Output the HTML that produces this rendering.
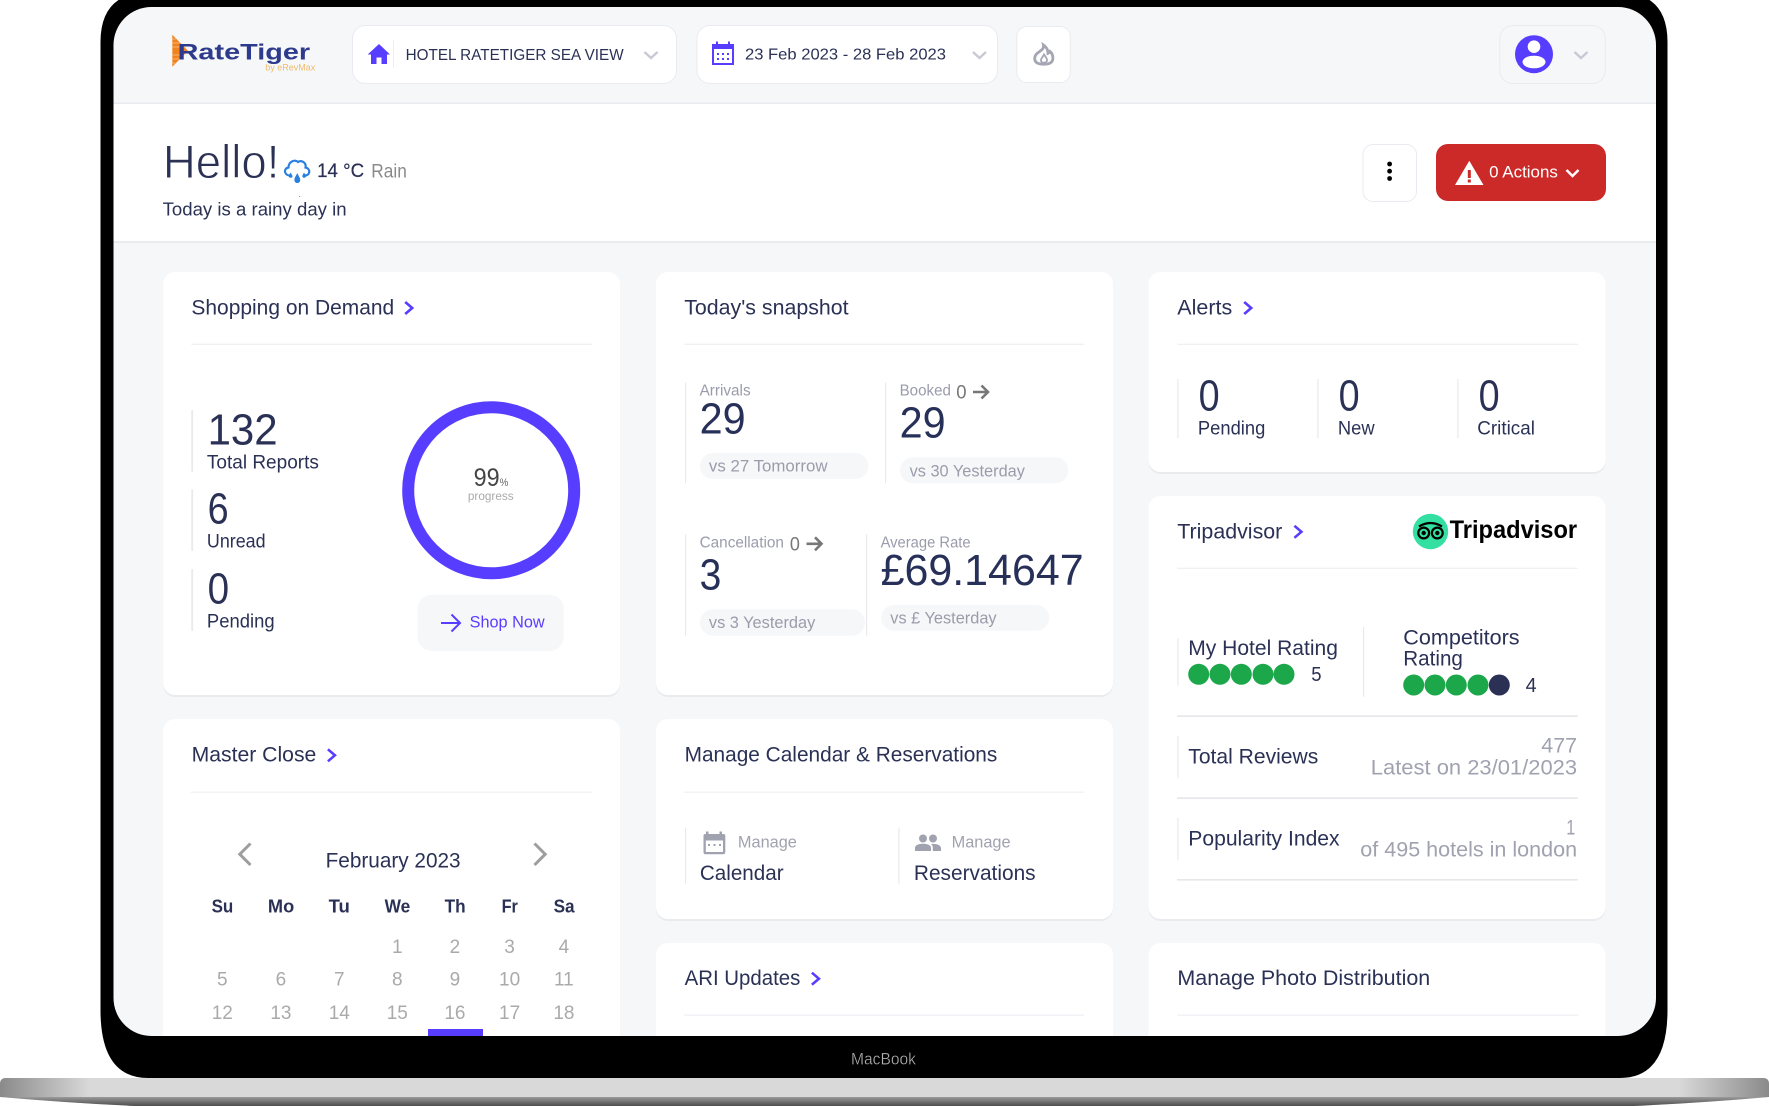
<!DOCTYPE html>
<html lang="en"><head><meta charset="utf-8"><title>RateTiger Dashboard</title>
<style>
html,body{margin:0;padding:0;background:#fff;width:1769px;height:1106px;overflow:hidden}
svg{display:block}
text{font-family:"Liberation Sans",sans-serif;fill:#2a3155;white-space:pre;transform:translate(-.4px,-.6px)}
.t{font-size:21px}.n{font-size:44px;fill:#273059}.l{font-size:19.5px}.s{font-size:15.5px;fill:#9a9cab}
.v{font-size:17px;fill:#9a9cab}.g{font-size:21px;fill:#a0a2b0}.d{font-size:19px;fill:#aaa}.w{font-size:18px;font-weight:700}
.o{font-size:19px;fill:#777}
.ch{fill:none;stroke:#573dff;stroke-width:2.6;transform:translate(-.6px,-.5px)}.sel{fill:none;stroke:#c8c9d4;stroke-width:2.4}
.ar{fill:none;stroke:#777;stroke-width:2.6}
.c{fill:#fff}.sh{fill:#e9ebef}.dv{fill:#eff0f4}.vb{fill:#e9eaee}
</style></head><body>
<svg xmlns="http://www.w3.org/2000/svg" width="1769" height="1106" viewBox="0 0 1769 1106">
<defs>
<linearGradient id="bl" x1="0" x2="1" y1="0" y2="0"><stop offset="0" stop-color="#8a8a8a"/><stop offset="1" stop-color="#d9d9d9"/></linearGradient>
<linearGradient id="br" x1="1" x2="0" y1="0" y2="0"><stop offset="0" stop-color="#8a8a8a"/><stop offset="1" stop-color="#d9d9d9"/></linearGradient>
<linearGradient id="bd" x1="0" x2="0" y1="0" y2="1"><stop offset="0" stop-color="#9a9a9a"/><stop offset="1" stop-color="#4d4d4d"/></linearGradient>
<clipPath id="scr"><rect x="113.5" y="7" width="1542.5" height="1029" rx="38" ry="38"/></clipPath>
</defs>

<!-- base -->
<path d="M6 1078H1763Q1769 1078 1769 1084V1097Q1700 1103 1634 1106H135Q69 1103 0 1097V1084Q0 1078 6 1078Z" fill="#d9d9d9"/>
<path d="M6 1078H90V1097H0V1084Q0 1078 6 1078Z" fill="url(#bl)"/>
<path d="M1763 1078H1679V1097H1769V1084Q1769 1078 1763 1078Z" fill="url(#br)"/>
<path d="M0 1097H1769Q1700 1103 1634 1106H135Q69 1103 0 1097Z" fill="url(#bd)"/>
<!-- bezel -->
<path d="M150.500 -8H1617.500Q1667.500 -8 1667.500 42V1010Q1667.500 1078 1620 1078H148Q100.500 1078 100.500 1010V42Q100.500 -8 150.500 -8Z" fill="#000"/>
<text x="851.400" y="1065" font-size="17" textLength="65" lengthAdjust="spacingAndGlyphs" style="fill:#b5b5b5" stroke="#000" stroke-width=".35">MacBook</text>

<g clip-path="url(#scr)">
<rect x="113" y="7" width="1544" height="1030" fill="#f6f7f9"/>
<!-- header band -->
<rect x="113" y="102.500" width="1544" height="1.500" fill="#e9ebf0"/>
<rect x="113" y="104" width="1544" height="137" fill="#fff"/>
<rect x="113" y="241" width="1544" height="2" fill="#e9ebf0"/>

<!-- logo -->
<polygon points="172.300,34.700 188,50.700 172.300,66.700" fill="#f0831e"/>
<g stroke="#f7c48a" stroke-width=".7"><path d="M172 39H176M172 43H180M172 47H184M172 55H183M172 59H179M172 63H175"/></g>
<text x="178" y="59.900" font-size="22.500" font-weight="700" textLength="132.500" lengthAdjust="spacingAndGlyphs" style="fill:#2e3a8c">RateTiger</text>
<text x="265.700" y="71.300" font-size="9" textLength="50" lengthAdjust="spacingAndGlyphs" style="fill:#f2bb6b">by eRevMax</text>

<!-- hotel select -->
<rect x="352.500" y="25.500" width="324" height="58" rx="13" fill="#fff" stroke="#e9ebf0"/>
<path d="M379 44L390 54.500H387V64H381.500V57.500H376.500V64H371V54.500H367.700Z" fill="#573dff"/>
<rect x="393.200" y="40" width=".8" height="28" fill="#e9ebf0"/>
<text x="406" y="60.500" font-size="16" textLength="218" lengthAdjust="spacingAndGlyphs">HOTEL RATETIGER SEA VIEW</text>
<path class="sel" d="M644.500 52L651 58L657.500 52"/>

<!-- date select -->
<rect x="697" y="25.500" width="300.500" height="58" rx="13" fill="#fff" stroke="#e9ebf0"/>
<rect x="713" y="45" width="20" height="19" fill="none" stroke="#573dff" stroke-width="2"/>
<rect x="713" y="45" width="20" height="4" fill="#573dff"/>
<path d="M717 41.500V46M729 41.500V46" stroke="#573dff" stroke-width="2"/>
<g fill="#573dff"><rect x="717" y="53" width="2" height="2"/><rect x="722" y="53" width="2" height="2"/><rect x="727" y="53" width="2" height="2"/><rect x="717" y="58" width="2" height="2"/><rect x="722" y="58" width="2" height="2"/><rect x="727" y="58" width="2" height="2"/></g>
<text x="745.400" y="60.300" font-size="16" textLength="201" lengthAdjust="spacingAndGlyphs">23 Feb 2023 - 28 Feb 2023</text>
<path class="sel" d="M973 52L979.500 58L986 52"/>

<!-- fire -->
<rect x="1016.800" y="26.500" width="53.500" height="56" rx="10" fill="#fff" stroke="#e9ebf0"/>
<path d="M1043.500 45C1044.500 49 1040.500 50.500 1037 53.500C1034 56.500 1034 60.500 1036.500 62.500C1039.500 64.800 1048 64.800 1051 62.500C1053.800 60 1053.500 54.500 1050 51.500C1049.500 52.500 1048.800 53 1048 53.300C1048 50 1046.500 47 1043.500 45Z" fill="none" stroke="#a5a6b4" stroke-width="2.800"/>
<path d="M1044 54.500C1045.500 57 1047.500 58.500 1047 60.800C1046 63.300 1041.500 63.300 1041 60.800C1040.500 58.500 1043 57 1044 54.500Z" fill="#fff" stroke="#a5a6b4" stroke-width="1.800"/>

<!-- user -->
<rect x="1499.800" y="25.500" width="105.500" height="58" rx="13" fill="#f6f7f9" stroke="#e9ebf0"/>
<circle cx="1534" cy="54.200" r="19" fill="#573dff"/>
<circle cx="1534" cy="46.700" r="6.300" fill="#fff"/>
<ellipse cx="1534" cy="62" rx="11.500" ry="6.300" fill="#fff"/>
<path class="sel" d="M1574.500 52L1581 58L1587.500 52"/>

<!-- hello -->
<text x="163.300" y="178.700" font-size="47.500" textLength="116.500" lengthAdjust="spacingAndGlyphs" stroke="#fff" stroke-width=".9">Hello!</text>
<path d="M291 175.500C284 176 283 168.500 288.500 167.500C288.500 161.500 295 159 298 162C302.500 159.500 306.500 163.500 305.500 167.500C311 168.500 310.500 176 304 175.500" fill="none" stroke="#2a80e0" stroke-width="2.200"/>
<path d="M297.300 173C298.500 176 300.200 177.500 300.200 180C300.200 184 294.400 184 294.400 180C294.400 177.500 296 176 297.300 173ZM290.500 172.500C291.300 174 292.500 175 292.500 176.200C292.500 178.300 288.800 178.300 288.800 176.200C288.800 175 289.800 174 290.500 172.500ZM304 172.500C304.800 174 306 175 306 176.200C306 178.300 302.300 178.300 302.300 176.200C302.300 175 303.300 174 304 172.500Z" fill="#2a80e0"/>
<rect x="299" y="196" width="1.200" height="1" fill="#6aa6ee"/>
<text x="317.500" y="177.700" font-size="19" textLength="47" lengthAdjust="spacingAndGlyphs" stroke="#2a3155" stroke-width=".2">14 °C</text>
<text x="371.700" y="178.300" font-size="19" textLength="35.500" lengthAdjust="spacingAndGlyphs" style="fill:#8a8a8a">Rain</text>
<text x="163" y="216" font-size="18" textLength="184" lengthAdjust="spacingAndGlyphs">Today is a rainy day in</text>

<!-- kebab -->
<rect x="1363" y="144.500" width="53.500" height="57" rx="10" fill="#fff" stroke="#e9ebf0"/>
<circle cx="1389.600" cy="164" r="2.400" fill="#000"/><circle cx="1389.600" cy="171.200" r="2.400" fill="#000"/><circle cx="1389.600" cy="178.500" r="2.400" fill="#000"/>
<!-- actions -->
<rect x="1436" y="144" width="170" height="57" rx="12" fill="#cc2929"/>
<path d="M1469.300 160.700L1483.500 185H1455Z" fill="#fff"/>
<rect x="1467.800" y="170" width="3" height="8" fill="#cc2929"/><rect x="1467.800" y="179.500" width="3" height="3" fill="#cc2929"/>
<text x="1489.500" y="178" font-size="16.500" textLength="68.800" lengthAdjust="spacingAndGlyphs" style="fill:#fff">0 Actions</text>
<path d="M1566.500 170L1572.500 176L1578.500 170" fill="none" stroke="#fff" stroke-width="2.500"/>

<!-- Card shadows and bodies -->
<g class="sh">
<rect x="163.200" y="274" width="456.800" height="423" rx="12"/>
<rect x="656" y="274" width="457" height="423" rx="12"/>
<rect x="1148.500" y="274" width="457" height="200" rx="12"/>
<rect x="1148.500" y="498" width="457" height="423" rx="12"/>
<rect x="656" y="721" width="457" height="200" rx="12"/>
</g>
<g class="c">
<rect x="163.200" y="272" width="456.800" height="423" rx="12"/>
<rect x="656" y="272" width="457" height="423" rx="12"/>
<rect x="1148.500" y="272" width="457" height="200" rx="12"/>
<rect x="1148.500" y="496" width="457" height="423" rx="12"/>
<rect x="163.200" y="719" width="456.800" height="340" rx="12"/>
<rect x="656" y="719" width="457" height="200" rx="12"/>
<rect x="656" y="943" width="457" height="120" rx="12"/>
<rect x="1148.500" y="943" width="457" height="120" rx="12"/>
</g>

<!-- Shopping on Demand -->
<text class="t" x="191.800" y="315" textLength="202.800" lengthAdjust="spacingAndGlyphs">Shopping on Demand</text>
<path class="ch" d="M405.800 302.500L412.800 308.500L405.800 314.500"/>
<rect class="dv" x="191.400" y="343.700" width="400.600" height="1.300"/>
<rect class="vb" x="191.300" y="410" width="1.800" height="61.700"/>
<rect class="vb" x="191.300" y="489.300" width="1.800" height="61.700"/>
<rect class="vb" x="191.300" y="569" width="1.800" height="62"/>
<text x="208" y="445" font-size="44" textLength="70" lengthAdjust="spacingAndGlyphs">132</text>
<text class="l" x="207.300" y="469" textLength="112" lengthAdjust="spacingAndGlyphs">Total Reports</text>
<text x="208" y="524.300" font-size="44" textLength="21" lengthAdjust="spacingAndGlyphs">6</text>
<text class="l" x="207.300" y="548.300" textLength="58.700" lengthAdjust="spacingAndGlyphs">Unread</text>
<text x="208" y="604.300" font-size="44" textLength="21.500" lengthAdjust="spacingAndGlyphs">0</text>
<text class="l" x="207.300" y="628.300" textLength="67.700" lengthAdjust="spacingAndGlyphs">Pending</text>
<circle cx="491.200" cy="490.300" r="83" fill="none" stroke="#573dff" stroke-width="12"/>
<text x="474" y="486.600" font-size="25" textLength="26" lengthAdjust="spacingAndGlyphs" style="fill:#444">99</text>
<text x="500" y="486.600" font-size="11" textLength="8.700" lengthAdjust="spacingAndGlyphs" style="fill:#666">%</text>
<text x="468.300" y="500.800" font-size="12" textLength="45.700" lengthAdjust="spacingAndGlyphs" style="fill:#aaa">progress</text>
<rect x="417.700" y="594.700" width="146" height="56.300" rx="14" fill="#f6f7f9"/>
<path d="M441 623H459M451.500 614.500L460 623L451.500 631.500" fill="none" stroke="#573dff" stroke-width="2"/>
<text x="470" y="628.300" font-size="17" textLength="75" lengthAdjust="spacingAndGlyphs" style="fill:#573dff">Shop Now</text>

<!-- Today's snapshot -->
<text class="t" x="684.600" y="315" textLength="164.400" lengthAdjust="spacingAndGlyphs">Today's snapshot</text>
<rect class="dv" x="684.300" y="343.700" width="400" height="1.300"/>
<rect class="vb" x="685" y="382.700" width="1.200" height="100.600"/>
<rect class="vb" x="885" y="382.700" width="1.200" height="100.600"/>
<text class="s" x="700" y="396" textLength="51" lengthAdjust="spacingAndGlyphs">Arrivals</text>
<text class="n" x="700" y="434" textLength="46" lengthAdjust="spacingAndGlyphs">29</text>
<rect x="700" y="453" width="168.300" height="26" rx="13" fill="#f6f7f9"/>
<text class="v" x="709.300" y="472.300" textLength="118.700" lengthAdjust="spacingAndGlyphs">vs 27 Tomorrow</text>
<text class="s" x="900" y="396" textLength="51.300" lengthAdjust="spacingAndGlyphs">Booked</text>
<text class="o" x="956.700" y="399.300" textLength="10.300" lengthAdjust="spacingAndGlyphs">0</text>
<path class="ar" d="M973 392H988M981.500 385.500L988 392L981.500 398.500"/>
<text class="n" x="900" y="438.300" textLength="46" lengthAdjust="spacingAndGlyphs">29</text>
<rect x="900" y="457.300" width="168.300" height="26" rx="13" fill="#f6f7f9"/>
<text class="v" x="910" y="477" textLength="115.300" lengthAdjust="spacingAndGlyphs">vs 30 Yesterday</text>
<rect class="vb" x="685" y="534.300" width="1.200" height="101.400"/>
<rect class="vb" x="866" y="534.300" width="1.200" height="101.400"/>
<text class="s" x="700" y="548" textLength="84.300" lengthAdjust="spacingAndGlyphs">Cancellation</text>
<text class="o" x="790.300" y="551.300" textLength="10" lengthAdjust="spacingAndGlyphs">0</text>
<path class="ar" d="M806.500 543.800H821.500M815 537.300L821.500 543.800L815 550.300"/>
<text class="n" x="700" y="590" textLength="21.700" lengthAdjust="spacingAndGlyphs">3</text>
<rect x="700" y="609.300" width="165" height="26.400" rx="13" fill="#f6f7f9"/>
<text class="v" x="709.300" y="628.700" textLength="106.400" lengthAdjust="spacingAndGlyphs">vs 3 Yesterday</text>
<text class="s" x="881" y="548" textLength="90" lengthAdjust="spacingAndGlyphs">Average Rate</text>
<text class="n" x="881" y="585.700" textLength="203" lengthAdjust="spacingAndGlyphs">£69.14647</text>
<rect x="881" y="605" width="168.300" height="25.700" rx="13" fill="#f6f7f9"/>
<text class="v" x="890.700" y="624" textLength="106.300" lengthAdjust="spacingAndGlyphs">vs £ Yesterday</text>

<!-- Alerts -->
<text class="t" x="1177.700" y="315" textLength="54.900" lengthAdjust="spacingAndGlyphs">Alerts</text>
<path class="ch" d="M1244.800 302.500L1251.800 308.500L1244.800 314.500"/>
<rect class="dv" x="1177.500" y="343.700" width="400.500" height="1.300"/>
<rect class="vb" x="1177.300" y="379" width="1.200" height="59"/>
<rect class="vb" x="1317.300" y="379" width="1.200" height="59"/>
<rect class="vb" x="1457.300" y="379" width="1.200" height="59"/>
<text x="1199" y="411" font-size="44" textLength="21" lengthAdjust="spacingAndGlyphs">0</text>
<text x="1339" y="411" font-size="44" textLength="21" lengthAdjust="spacingAndGlyphs">0</text>
<text x="1479" y="411" font-size="44" textLength="21" lengthAdjust="spacingAndGlyphs">0</text>
<text class="l" x="1198.300" y="435.300" textLength="67.400" lengthAdjust="spacingAndGlyphs">Pending</text>
<text class="l" x="1338.300" y="435.300" textLength="36.700" lengthAdjust="spacingAndGlyphs">New</text>
<text class="l" x="1477.700" y="435.300" textLength="57.600" lengthAdjust="spacingAndGlyphs">Critical</text>

<!-- Tripadvisor -->
<text class="t" x="1177.700" y="539" textLength="105" lengthAdjust="spacingAndGlyphs">Tripadvisor</text>
<path class="ch" d="M1295 526.300L1302 532.300L1295 538.300"/>
<circle cx="1430.500" cy="531.500" r="17.700" fill="#34e0a1"/>
<path d="M1419 526.500Q1430.500 519.500 1442 526.500" fill="none" stroke="#000" stroke-width="2.200"/>
<circle cx="1423.700" cy="533" r="5.400" fill="#34e0a1" stroke="#000" stroke-width="2.200"/>
<circle cx="1437.300" cy="533" r="5.400" fill="#34e0a1" stroke="#000" stroke-width="2.200"/>
<circle cx="1423.700" cy="533" r="2.200" fill="#000"/><circle cx="1437.300" cy="533" r="2.200" fill="#000"/>
<text x="1450" y="538.800" font-size="25" font-weight="700" textLength="127.500" lengthAdjust="spacingAndGlyphs" style="fill:#000">Tripadvisor</text>
<rect class="dv" x="1177" y="567.700" width="400.700" height="1.300"/>
<rect class="vb" x="1177.300" y="638.300" width="1.200" height="47.400"/>
<text class="t" x="1188.700" y="655.700" textLength="149.600" lengthAdjust="spacingAndGlyphs">My Hotel Rating</text>
<g fill="#1ca84a"><circle cx="1198.700" cy="674.300" r="10.500"/><circle cx="1220" cy="674.300" r="10.500"/><circle cx="1241.300" cy="674.300" r="10.500"/><circle cx="1263" cy="674.300" r="10.500"/><circle cx="1284" cy="674.300" r="10.500"/></g>
<text x="1311.700" y="681.700" font-size="20" textLength="10.300" lengthAdjust="spacingAndGlyphs">5</text>
<rect class="vb" x="1363" y="627" width="1.200" height="69.700"/>
<text class="t" x="1403.700" y="645" textLength="116.300" lengthAdjust="spacingAndGlyphs">Competitors</text>
<text class="t" x="1403.700" y="666.300" textLength="59.600" lengthAdjust="spacingAndGlyphs">Rating</text>
<g fill="#1ca84a"><circle cx="1413.700" cy="685" r="10.500"/><circle cx="1435" cy="685" r="10.500"/><circle cx="1456.300" cy="685" r="10.500"/><circle cx="1478" cy="685" r="10.500"/></g>
<circle cx="1499.300" cy="685" r="10.500" fill="#2a3155"/>
<text x="1526" y="692.700" font-size="20" textLength="11" lengthAdjust="spacingAndGlyphs">4</text>
<rect x="1177" y="715.300" width="400.700" height="1.600" fill="#e6e7ea"/>
<rect class="vb" x="1177.300" y="736" width="1.200" height="42.300"/>
<text class="t" x="1188.700" y="764" textLength="130" lengthAdjust="spacingAndGlyphs">Total Reviews</text>
<text class="g" x="1541.700" y="753.300" textLength="35.800" lengthAdjust="spacingAndGlyphs">477</text>
<text class="g" x="1371.200" y="775" textLength="206.300" lengthAdjust="spacingAndGlyphs">Latest on 23/01/2023</text>
<rect x="1177" y="797.300" width="400.700" height="1.600" fill="#e6e7ea"/>
<rect class="vb" x="1177.300" y="818" width="1.200" height="42"/>
<text class="t" x="1188.700" y="846" textLength="151.300" lengthAdjust="spacingAndGlyphs">Popularity Index</text>
<text class="g" x="1566.700" y="835.300" textLength="9" lengthAdjust="spacingAndGlyphs">1</text>
<text class="g" x="1360.700" y="857" textLength="216.800" lengthAdjust="spacingAndGlyphs">of 495 hotels in london</text>
<rect x="1177" y="879" width="400.700" height="1.600" fill="#e6e7ea"/>

<!-- Master Close -->
<text class="t" x="192" y="762.300" textLength="124.700" lengthAdjust="spacingAndGlyphs">Master Close</text>
<path class="ch" d="M328.500 749.800L335.500 755.800L328.500 761.800"/>
<rect class="dv" x="191" y="791.500" width="401" height="1.300"/>
<path d="M250.500 843.500L239.800 854.200L250.500 865" fill="none" stroke="#9e9e9e" stroke-width="3"/>
<path d="M534.500 843.500L545.200 854.200L534.500 865" fill="none" stroke="#9e9e9e" stroke-width="3"/>
<text class="t" x="326" y="868.300" textLength="135" lengthAdjust="spacingAndGlyphs">February 2023</text>
<g class="cal">
<text class="w" x="212" y="913.300" textLength="21.700" lengthAdjust="spacingAndGlyphs">Su</text>
<text class="w" x="268.300" y="913.300" textLength="26.300" lengthAdjust="spacingAndGlyphs">Mo</text>
<text class="w" x="329" y="913.300" textLength="21.300" lengthAdjust="spacingAndGlyphs">Tu</text>
<text class="w" x="385" y="913.300" textLength="25.700" lengthAdjust="spacingAndGlyphs">We</text>
<text class="w" x="445" y="913.300" textLength="21" lengthAdjust="spacingAndGlyphs">Th</text>
<text class="w" x="502" y="913.300" textLength="16.300" lengthAdjust="spacingAndGlyphs">Fr</text>
<text class="w" x="554" y="913.300" textLength="21" lengthAdjust="spacingAndGlyphs">Sa</text>
</g>
<g text-anchor="middle">
<text class="d" x="397.700" y="953.400">1</text><text class="d" x="455.300" y="953.400">2</text><text class="d" x="510" y="953.400">3</text><text class="d" x="564.300" y="953.400">4</text>
<text class="d" x="222.700" y="986.100">5</text><text class="d" x="281.300" y="986.100">6</text><text class="d" x="339.700" y="986.100">7</text><text class="d" x="397.700" y="986.100">8</text><text class="d" x="455.300" y="986.100">9</text><text class="d" x="510" y="986.100">10</text><text class="d" x="564.300" y="986.100">11</text>
<text class="d" x="222.700" y="1019.400">12</text><text class="d" x="281.300" y="1019.400">13</text><text class="d" x="339.700" y="1019.400">14</text><text class="d" x="397.700" y="1019.400">15</text><text class="d" x="455.300" y="1019.400">16</text><text class="d" x="510" y="1019.400">17</text><text class="d" x="564.300" y="1019.400">18</text>
</g>
<rect x="428" y="1029" width="55" height="8" fill="#573dff"/>

<!-- Manage Calendar -->
<text class="t" x="685" y="762.300" textLength="312.700" lengthAdjust="spacingAndGlyphs">Manage Calendar &amp; Reservations</text>
<rect class="dv" x="684.300" y="791.500" width="400" height="1.300"/>
<rect class="vb" x="685" y="827.700" width="1.200" height="56"/>
<rect class="vb" x="898.300" y="827.700" width="1.200" height="56"/>
<path d="M706 831.500V834H705Q703.500 834 703.500 836V852Q703.500 854.300 705.500 854.300H723Q725.300 854.300 725.300 852V836Q725.300 834 723.500 834H722V831.500H719.500V834H708.500V831.500ZM705.800 840.500H723V852H705.800Z" fill="#a0a2b0" fill-rule="evenodd"/>
<g fill="#a0a2b0"><rect x="708" y="844" width="2" height="2"/><rect x="713.500" y="844" width="2" height="2"/><rect x="719" y="844" width="2" height="2"/></g>
<text x="738.300" y="848.200" font-size="16.500" textLength="59" lengthAdjust="spacingAndGlyphs" style="fill:#a0a2b0">Manage</text>
<text class="t" x="700.300" y="880.700" textLength="83.700" lengthAdjust="spacingAndGlyphs">Calendar</text>
<circle cx="923" cy="838.500" r="4" fill="#a0a2b0"/><circle cx="933" cy="838.500" r="4" fill="#a0a2b0"/>
<path d="M915 851V848C915 845 919 843.800 923 843.800C927 843.800 931 845 931 848V851ZM932.800 851V847.500C932.800 846 932 844.800 931 844C936 843.300 941 845 941 848V851Z" fill="#a0a2b0"/>
<text x="952" y="848.200" font-size="16.500" textLength="59" lengthAdjust="spacingAndGlyphs" style="fill:#a0a2b0">Manage</text>
<text class="t" x="914.300" y="880.700" textLength="121.700" lengthAdjust="spacingAndGlyphs">Reservations</text>

<!-- ARI -->
<text class="t" x="685" y="985.700" textLength="115.700" lengthAdjust="spacingAndGlyphs">ARI Updates</text>
<path class="ch" d="M812.500 973.200L819.500 979.200L812.500 985.200"/>
<rect class="dv" x="684.300" y="1014.500" width="400" height="1.300"/>

<!-- Photo -->
<text class="t" x="1177.800" y="985.700" textLength="252.800" lengthAdjust="spacingAndGlyphs">Manage Photo Distribution</text>
<rect class="dv" x="1177.500" y="1014.500" width="400.500" height="1.300"/>
</g>
</svg>
</body></html>
